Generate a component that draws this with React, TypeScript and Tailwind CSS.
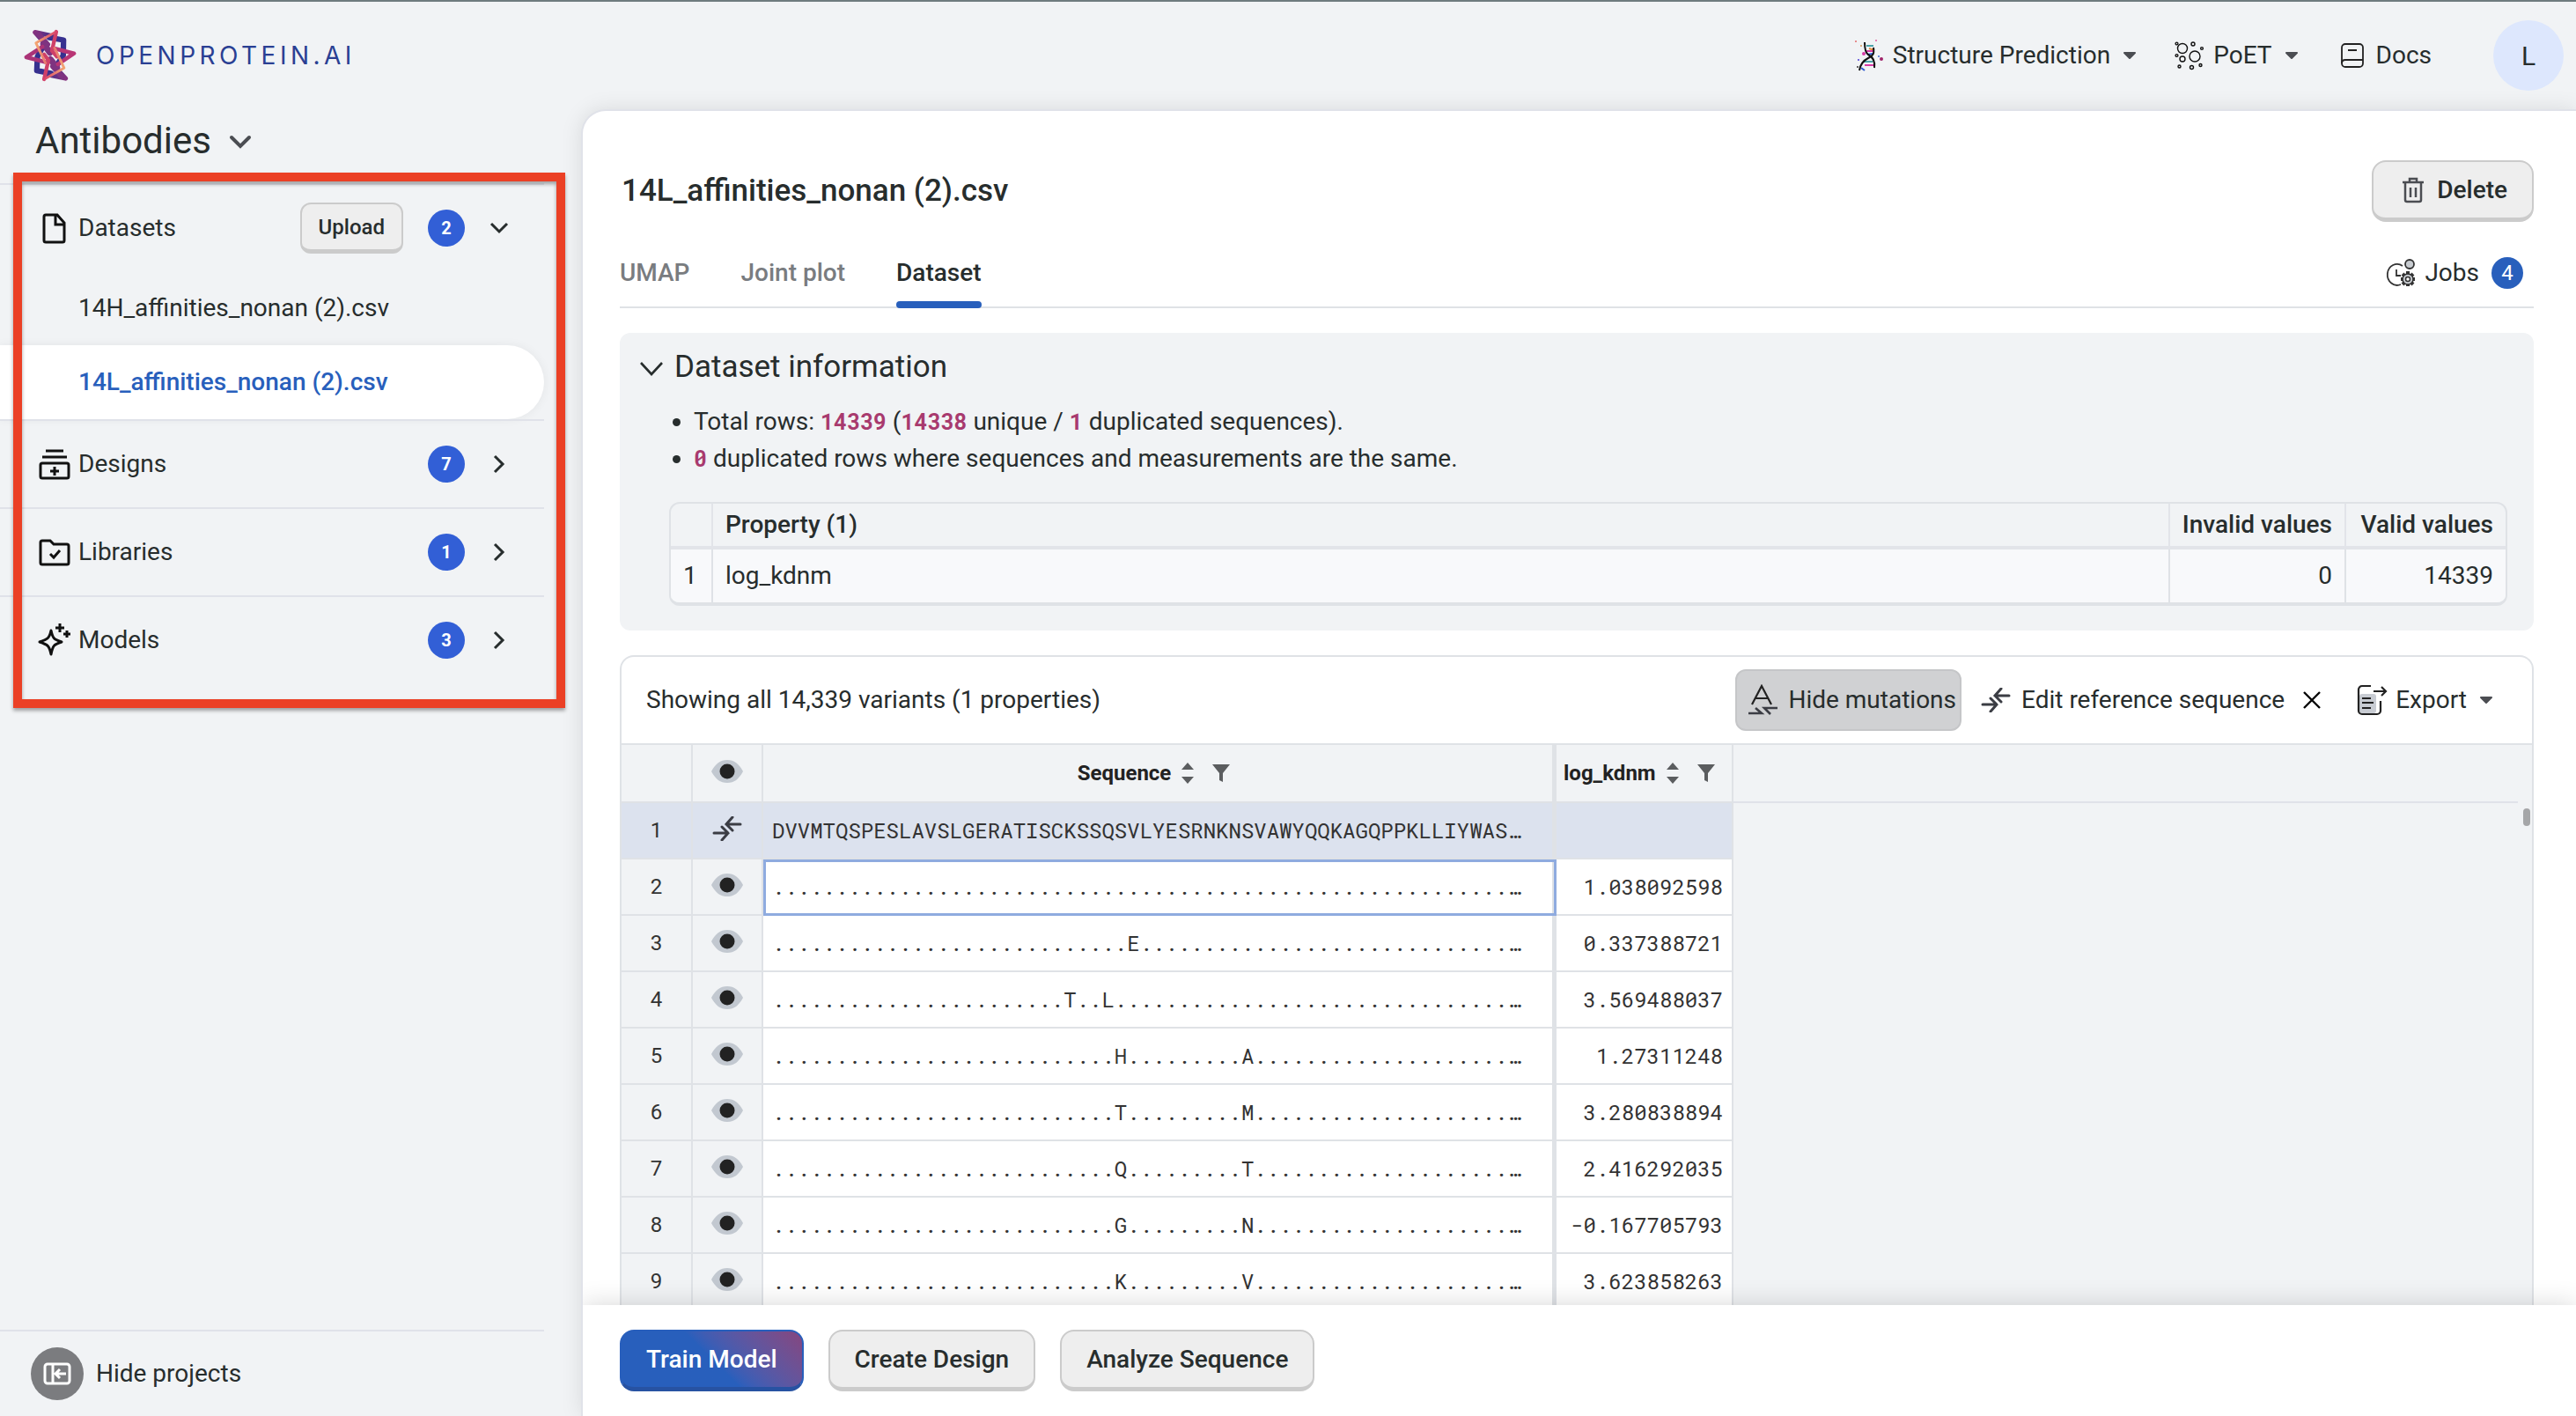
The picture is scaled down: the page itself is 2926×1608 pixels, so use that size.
import type { ReactNode } from "react";

type IconProps = { w: number; h: number; className?: string; children: ReactNode };

function Icon({ w, h, className = "", children }: IconProps) {
  return (
    <svg
      width={w}
      height={h}
      viewBox={`0 0 ${w} ${h}`}
      fill="none"
      stroke="currentColor"
      aria-hidden="true"
      className={`shrink-0 ${className}`}
    >
      {children}
    </svg>
  );
}

const Logo = () => (
  <svg width={60} height={60} viewBox="22 37 182 182" fill="none" strokeLinecap="round" strokeLinejoin="round" aria-hidden="true" className="shrink-0">
    <defs>
      <linearGradient id="lgOrange" x1="0" y1="0" x2="1" y2="0">
        <stop offset="0" stopColor="#f3a673" />
        <stop offset="1" stopColor="#d9456a" />
      </linearGradient>
      <linearGradient id="lgOrange2" x1="1" y1="0" x2="0" y2="0">
        <stop offset="0" stopColor="#f3a673" />
        <stop offset="1" stopColor="#d9456a" />
      </linearGradient>
      <linearGradient id="lgPurple" x1="0" y1="0" x2="1" y2="0.4">
        <stop offset="0" stopColor="#84327f" />
        <stop offset="1" stopColor="#3a2f8c" />
      </linearGradient>
      <linearGradient id="lgPurple2" x1="1" y1="1" x2="0" y2="0.5">
        <stop offset="0" stopColor="#84327f" />
        <stop offset="1" stopColor="#3a2f8c" />
      </linearGradient>
    </defs>
    <path d="M110 66 L159 75 L158 128 L138 158" stroke="#36308f" strokeWidth="19" />
    <path d="M116 190 L67 180 L69 132 L88 98" stroke="#36308f" strokeWidth="19" />
    <path d="M100 92 L61 48 L126 62" stroke="url(#lgPurple)" strokeWidth="16" />
    <path d="M126 164 L166 207 L100 193" stroke="url(#lgPurple2)" strokeWidth="16" />
    <path d="M74 56 L104 90 M152 199 L122 166" stroke="#7e3380" strokeWidth="18" />
    <path d="M90 88 L112 118" stroke="#7e3380" strokeWidth="22" />
    <path d="M136 170 L114 142" stroke="#7e3380" strokeWidth="22" />
    <path d="M86 98 L31 134 L104 152" stroke="#ab3377" strokeWidth="14" />
    <path d="M140 158 L195 121 L121 102" stroke="#b83575" strokeWidth="14" />
    <path d="M134 46 L119 112 L136 132" stroke="#cf4068" strokeWidth="13" />
    <path d="M92 210 L107 144 L92 124" stroke="#cf4068" strokeWidth="13" />
    <path d="M134 46 L64 85 L97 154" stroke="url(#lgOrange)" strokeWidth="9" />
    <path d="M92 210 L161 171 L128 102" stroke="url(#lgOrange2)" strokeWidth="9" />
  </svg>
);

const HelixIcon = () => (
  <Icon w={34} h={36}>
    <g strokeWidth="2">
      <path d="M14 7h8" stroke="#4aa3a8" />
      <path d="M17 10l6 2" stroke="#e8893a" />
      <path d="M13 13h9" stroke="#d63ba4" />
      <path d="M15 17l6-1" stroke="#2f5bd0" />
      <path d="M11 25h10" stroke="#4aa3a8" />
      <path d="M12 29h10" stroke="#d63ba4" />
      <path d="M8 32l4 3" stroke="#2f5bd0" />
    </g>
    <path d="M12 3c0 7 1 12 4 14 6 3 8 8 7 15M22 9c1 7 0 9-6 12-6 3-9 7-10 14" stroke="#111" strokeWidth="2" />
    <g stroke="none">
      <circle cx="2" cy="2" r="1" fill="#e06a6a" />
      <circle cx="25" cy="1" r="1" fill="#e05a9a" />
      <circle cx="8" cy="7" r="1" fill="#d69a5a" />
      <circle cx="11" cy="16" r="2" fill="#d63ba4" />
      <circle cx="5" cy="23" r="1" fill="#4a3bd6" />
      <circle cx="28" cy="19" r="1" fill="#3b6bd6" />
      <circle cx="31" cy="22" r="2" fill="#a0246a" />
      <circle cx="4" cy="31" r="1" fill="#333" />
    </g>
  </Icon>
);

const PoetIcon = () => (
  <Icon w={34} h={34} className="text-[#111]">
    <g strokeWidth="1.4">
      <circle cx="9" cy="9" r="5.5" />
      <circle cx="23" cy="18" r="6" />
      <circle cx="9" cy="21" r="3" />
      <circle cx="21" cy="4" r="2" />
      <circle cx="2.500" cy="3.500" r="1.400" />
      <circle cx="31" cy="9" r="1.400" />
      <circle cx="2.500" cy="17" r="1.400" />
      <circle cx="5.500" cy="29.500" r="1.500" />
      <circle cx="19.500" cy="30.500" r="2" />
      <circle cx="29.500" cy="28" r="1.500" />
    </g>
  </Icon>
);

const DocsIcon = () => (
  <Icon w={26} h={30} className="text-[#222]">
    <rect x="1" y="2" width="24" height="26" rx="4" strokeWidth="1.8" />
    <path d="M1 24c0-3 2-4 4-4h20M8 9h10" strokeWidth="1.8" />
  </Icon>
);

const Caret = () => (
  <Icon w={16} h={10} className="text-[#4b4d52]">
    <path d="M2 2h12L8 8z" fill="currentColor" strokeWidth="2" strokeLinejoin="round" />
  </Icon>
);

const ChevronDown = ({ className = "text-[#272d2d]" }: { className?: string }) => (
  <Icon w={22} h={14} className={className}>
    <path d="M2 2l9 9 9-9" strokeWidth="3" />
  </Icon>
);

const ChevronRight = () => (
  <span className="flex w-[22px] justify-center">
    <Icon w={14} h={22} className="text-[#272d2d]">
      <path d="M2 2l9 9-9 9" strokeWidth="3" />
    </Icon>
  </span>
);

const FileIcon = () => (
  <Icon w={36} h={36} className="text-[#111]">
    <path d="M6 5a2 2 0 0 1 2-2h13l8 9v20a2 2 0 0 1-2 2H8a2 2 0 0 1-2-2zM19 3v11h10" strokeWidth="3" />
  </Icon>
);

const DesignsIcon = () => (
  <Icon w={36} h={36} className="text-[#111]">
    <path d="M8 3h20M4 10h28M18 21v10M13 26h10" strokeWidth="3" />
    <rect x="2" y="17" width="32" height="17" rx="2" strokeWidth="3" />
  </Icon>
);

const LibrariesIcon = () => (
  <Icon w={36} h={36} className="text-[#111]">
    <path d="M2 7a2 2 0 0 1 2-2h9l4 4h15a2 2 0 0 1 2 2v19a2 2 0 0 1-2 2H4a2 2 0 0 1-2-2z" strokeWidth="3" />
    <path d="M13 20l4 4 7-8" strokeWidth="3" />
  </Icon>
);

const ModelsIcon = () => (
  <Icon w={38} h={40} className="text-[#111]">
    <path d="M15 9c2 9 3 10 12 13-9 3-10 4-12 14-2-10-4-11-13-14 9-3 11-4 13-13z" strokeWidth="3" strokeLinejoin="round" />
    <path d="M25 1v10M20 6h10M33 9v8M29 13h8" strokeWidth="3" />
  </Icon>
);

const TrashIcon = () => (
  <Icon w={26} h={30} className="text-[#4b4d52]">
    <path d="M1 6h24M9 5V2h8v3M4 7v19a2 2 0 0 0 2 2h14a2 2 0 0 0 2-2V7M10 12v11M16 12v11" strokeWidth="2.500" />
  </Icon>
);

const JobsIcon = () => (
  <Icon w={34} h={34} className="text-[#333]">
    <path d="M19 9A11 12 0 1 0 17 30" strokeWidth="1.800" />
    <path d="M12 13v7h5" strokeWidth="1.800" />
    <circle cx="27" cy="7" r="5" fill="#c8ccd1" strokeWidth="1.800" />
    <path d="M25 15v17M17 24h16M19 18l12 12M31 18L19 30" strokeWidth="4" />
    <circle cx="25" cy="24" r="6" fill="#c8ccd1" strokeWidth="1.500" />
    <circle cx="25" cy="24" r="2.500" fill="#fff" strokeWidth="1.500" />
  </Icon>
);

const MutationsIcon = () => (
  <Icon w={34} h={36} className="text-[#222]">
    <path d="M5 23L16 2l11 21M9 16h14" strokeWidth="2.200" />
    <path d="M1 33h15l-7-6M34 27H19l7 7" strokeWidth="2.600" stroke="#3b3d44" />
  </Icon>
);

const AlignIcon = () => (
  <Icon w={34} h={28} className="text-[#3b3d44]">
    <path d="M2 19h16M11 12l7 7-7 8M32 9H16M23 1l-7 8 7 7" strokeWidth="3" strokeLinecap="round" />
  </Icon>
);

const CloseIcon = () => (
  <Icon w={20} h={20} className="text-black">
    <path d="M1 1l18 18M19 1L1 19" strokeWidth="2.400" />
  </Icon>
);

const ExportIcon = () => (
  <Icon w={36} h={36} className="text-[#222]">
    <rect x="3" y="11" width="19" height="22" rx="3" fill="#c8ccd3" stroke="none" />
    <path d="M16 2H6a4 4 0 0 0-4 4v24a4 4 0 0 0 4 4h17a4 4 0 0 0 4-4V19" strokeWidth="2.200" />
    <path d="M19 8h14M28 3l5 5-5 5M6 16h10M6 21h13M6 27h10" strokeWidth="2.200" />
  </Icon>
);

const Eye = () => (
  <Icon w={36} h={28}>
    <path d="M0 14C5 5 10 1 18 1s13 4 18 13c-5 9-10 13-18 13S5 23 0 14z" fill="#c2c8d0" stroke="none" />
    <circle cx="18" cy="14" r="8.500" fill="#222" stroke="none" />
  </Icon>
);

const SortIcon = () => (
  <Icon w={14} h={26}>
    <path d="M7 1l7 8H0zM7 25l7-8H0z" fill="#5b5d5f" stroke="none" />
  </Icon>
);

const FilterIcon = () => (
  <Icon w={22} h={22}>
    <path d="M1 1h20l-8 10v10l-4-2v-8z" fill="#5b5d5f" stroke="none" />
  </Icon>
);

const PanelIcon = () => (
  <Icon w={32} h={26} className="text-white">
    <rect x="2" y="2" width="28" height="22" rx="3" strokeWidth="3" />
    <path d="M11 2v22M26 13H15M19 8l-5 5 5 5" strokeWidth="3" />
  </Icon>
);

const Count = ({ n }: { n: number }) => (
  <span className="flex size-[42px] items-center justify-center rounded-full bg-[#325fd6] text-[20px] font-bold text-white">{n}</span>
);

function Section({ icon, label, count, open, action }: { icon: ReactNode; label: string; count: number; open?: boolean; action?: ReactNode }) {
  return (
    <div className="flex h-[98px] items-center pr-10 pl-11">
      <span className="flex w-9 justify-center">{icon}</span>
      <span className="ml-[9px] flex-1">{label}</span>
      {action}
      <span className="ml-7 flex items-center gap-7">
        <Count n={count} />
        <button type="button" aria-label={`Toggle ${label}`}>
          {open ? <ChevronDown /> : <ChevronRight />}
        </button>
      </span>
    </div>
  );
}

const grayButton = "border-2 border-b-[5px] border-[#cbcbcb] bg-[#eeeeee] font-medium";

const Code = ({ children }: { children: ReactNode }) => (
  <code className="font-['Roboto_Mono','Liberation_Mono',monospace] text-[25px] font-bold text-[#a83a6e]">{children}</code>
);

const dots = (n: number) => ".".repeat(n);

function variant(mutations: [number, string][]) {
  const row = dots(58).split("");
  mutations.forEach(([at, residue]) => {
    row[at] = residue;
  });
  return row.join("") + "…";
}

const rows: { seq: string; value: string }[] = [
  { seq: "DVVMTQSPESLAVSLGERATISCKSSQSVLYESRNKNSVAWYQQKAGQPPKLLIYWAS…", value: "" },
  { seq: variant([]), value: "1.038092598" },
  { seq: variant([[28, "E"]]), value: "0.337388721" },
  { seq: variant([[23, "T"], [26, "L"]]), value: "3.569488037" },
  { seq: variant([[27, "H"], [37, "A"]]), value: "1.27311248" },
  { seq: variant([[27, "T"], [37, "M"]]), value: "3.280838894" },
  { seq: variant([[27, "Q"], [37, "T"]]), value: "2.416292035" },
  { seq: variant([[27, "G"], [37, "N"]]), value: "-0.167705793" },
  { seq: variant([[27, "K"], [37, "V"]]), value: "3.623858263" },
];

function Header() {
  return (
    <header className="flex h-[122px] shrink-0 items-center pr-[14px] pl-[27px]">
      <a href="#home" className="flex items-center gap-[22px]">
        <Logo />
        <span className="font-['Inter',sans-serif] text-[28px] tracking-[0.16em] text-[#2a3f93]">OPENPROTEIN.AI</span>
      </a>
      <nav className="ml-auto flex items-center">
        <button type="button" className="flex items-center">
          <HelixIcon />
          <span className="mr-3.5 ml-2.5">Structure Prediction</span>
          <Caret />
        </button>
        <button type="button" className="ml-[43px] flex items-center">
          <PoetIcon />
          <span className="mr-3.5 ml-2.5">PoET</span>
          <Caret />
        </button>
        <a href="#docs" className="ml-12 flex items-center gap-3.5">
          <DocsIcon />
          Docs
        </a>
      </nav>
      <button type="button" aria-label="Account" className="ml-[70px] size-20 rounded-full bg-[#dde7fd] text-[30px]">
        L
      </button>
    </header>
  );
}

function Sidebar() {
  return (
    <aside className="flex w-[660px] shrink-0 flex-col">
      <button type="button" className="mb-3.5 flex h-[70px] items-center gap-5 pl-10 text-[42px]">
        Antibodies
        <Icon w={26} h={16} className="mt-1 text-[#4b4d52]">
          <path d="M3 3l10 10L23 3" strokeWidth="4" strokeLinecap="round" />
        </Icon>
      </button>
      <nav aria-label="Project" className="relative">
        <ul className="mr-[42px]">
          <li className="border-t-2 border-[#e0e2e9]">
            <Section
              icon={<FileIcon />}
              label="Datasets"
              count={2}
              open
              action={
                <button type="button" className={`h-[58px] rounded-xl px-[19px] text-[24px] ${grayButton}`}>
                  Upload
                </button>
              }
            />
            <a href="#14h" className="flex h-[84px] items-center pl-[89px]">
              14H_affinities_nonan (2).csv
            </a>
            <a
              href="#14l"
              aria-current="page"
              className="flex h-[84px] items-center rounded-r-full bg-white pl-[89px] font-medium text-[#285fbc] shadow-[0_0_12px_rgba(0,0,0,0.06)]"
            >
              14L_affinities_nonan (2).csv
            </a>
          </li>
          <li className="border-t-2 border-[#e0e2e9]">
            <Section icon={<DesignsIcon />} label="Designs" count={7} />
          </li>
          <li className="border-t-2 border-[#e0e2e9]">
            <Section icon={<LibrariesIcon />} label="Libraries" count={1} />
          </li>
          <li className="border-t-2 border-[#e0e2e9]">
            <Section icon={<ModelsIcon />} label="Models" count={3} />
          </li>
        </ul>
        <div className="pointer-events-none absolute -top-3 right-[18px] -bottom-7 left-[15px] border-[10px] border-[#eb4025] shadow-[0_3px_4px_rgba(0,0,0,0.35),inset_0_3px_4px_rgba(0,0,0,0.35)]" />
      </nav>
      <button type="button" className="mt-auto mr-[42px] flex h-[98px] items-center gap-3.5 border-t-2 border-[#e0e2e9] pl-[35px]">
        <span className="flex size-[60px] items-center justify-center rounded-full bg-[#7b7c7f]">
          <PanelIcon />
        </span>
        Hide projects
      </button>
    </aside>
  );
}

function DatasetInfo() {
  return (
    <section className="mt-7 rounded-xl bg-[#f1f3f5] pt-3.5 pr-7 pb-7">
      <button type="button" className="flex h-[50px] items-center gap-3 pl-[22px] text-[35px]">
        <Icon w={28} h={18} className="mt-1">
          <path d="M2 2l12 13L26 2" strokeWidth="2.600" />
        </Icon>
        Dataset information
      </button>
      <ul className="mt-4 list-disc pl-[84px] leading-[42px]">
        <li>
          Total rows: <Code>14339</Code> (<Code>14338</Code> unique / <Code>1</Code> duplicated sequences).
        </li>
        <li>
          <Code>0</Code> duplicated rows where sequences and measurements are the same.
        </li>
      </ul>
      <div className="mt-7 mr-0.5 ml-14 overflow-hidden rounded-xl border-2 border-b-4 border-[#dfe2e6]">
        <table className="w-full border-separate border-spacing-0">
          <thead>
            <tr className="h-[52px] [&>th]:border-b-4 [&>th]:border-[#e2e4e9] [&>th]:px-3.5 [&>th]:font-medium [&>th:not(:last-child)]:border-r-2">
              <th className="w-[48px]" aria-label="Row" />
              <th className="text-left">Property (1)</th>
              <th className="w-[200px] text-right whitespace-nowrap">Invalid values</th>
              <th className="w-[181px] text-right whitespace-nowrap">Valid values</th>
            </tr>
          </thead>
          <tbody>
            <tr className="h-[60px] bg-[#f8f9fb] [&>td]:px-3.5 [&>td:not(:last-child)]:border-r-2 [&>td:not(:last-child)]:border-[#dfe2e6]">
              <td>1</td>
              <td>log_kdnm</td>
              <td className="text-right">0</td>
              <td className="text-right">14339</td>
            </tr>
          </tbody>
        </table>
      </div>
    </section>
  );
}

function VariantTable() {
  return (
    <table className="w-[1263px] table-fixed border-separate border-spacing-0 bg-white text-[24px] text-[#333]">
      <colgroup>
        <col className="w-[81px]" />
        <col className="w-[80px]" />
        <col className="w-[901px]" />
        <col className="w-[201px]" />
      </colgroup>
      <thead>
        <tr className="h-[66px] bg-[#f1f3f5] text-[#222] [&>th]:border-b-2 [&>th]:border-[#dfe2e6] [&>th]:font-bold">
          <th className="border-r-2" aria-label="Row" />
          <th className="border-r-2" aria-label="Visible">
            <span className="flex justify-center pb-1">
              <Eye />
            </span>
          </th>
          <th className="border-r-[5px]">
            <span className="flex items-center justify-center gap-3 pr-2">
              Sequence
              <SortIcon />
              <span className="ml-2">
                <FilterIcon />
              </span>
            </span>
          </th>
          <th className="border-r-2">
            <span className="flex items-center gap-3 pl-2">
              log_kdnm
              <SortIcon />
              <span className="ml-2">
                <FilterIcon />
              </span>
            </span>
          </th>
        </tr>
      </thead>
      <tbody>
        {rows.map((row, i) => {
          const reference = i === 0;
          const head = reference ? "bg-[#dce2ee]" : "bg-[#f1f3f5]";
          const cell = reference ? "bg-[#dce2ee]" : "bg-white";
          const border = i === 1 ? "border-b-2 border-[#dfe2e6] outline-[3px] -outline-offset-3 outline-[#8fabdf]" : "border-b-2 border-[#dfe2e6]";
          return (
            <tr key={i} className="h-16">
              <td className={`border-r-2 border-b-2 border-[#dfe2e6] text-center ${head}`}>{i + 1}</td>
              <td className={`border-r-2 border-b-2 border-[#dfe2e6] ${head}`}>
                <span className="flex justify-center pb-1">{reference ? <AlignIcon /> : <Eye />}</span>
              </td>
              <td className={`border-r-[5px] pl-[10px] font-['Roboto_Mono','Liberation_Mono',monospace] whitespace-nowrap ${border} ${cell}`}>{row.seq}</td>
              <td className={`border-r-2 border-b-2 border-[#dfe2e6] pr-[10px] text-right font-['Roboto_Mono','Liberation_Mono',monospace] ${cell}`}>{row.value}</td>
            </tr>
          );
        })}
      </tbody>
    </table>
  );
}

function Variants() {
  return (
    <section className="mt-7 rounded-t-2xl border-2 border-b-0 border-[#dfe2e6]">
      <div className="flex h-[100px] items-center border-b-2 border-[#dfe2e6] pr-11 pl-7">
        <p className="flex-1">Showing all 14,339 variants (1 properties)</p>
        <button type="button" aria-pressed="true" className="flex h-[70px] items-center gap-3 rounded-xl border-2 border-[#c5c6c8] bg-[#d0d1d3] pr-1 pl-3">
          <MutationsIcon />
          Hide mutations
        </button>
        <button type="button" className="ml-[22px] flex items-center gap-3">
          <AlignIcon />
          Edit reference sequence
        </button>
        <button type="button" aria-label="Clear reference sequence" className="ml-[21px]">
          <CloseIcon />
        </button>
        <button type="button" className="ml-[41px] flex items-center">
          <ExportIcon />
          <span className="mr-3.5 ml-2">Export</span>
          <Caret />
        </button>
      </div>
      <div className="flex bg-[#f1f3f5]">
        <VariantTable />
        <div className="mr-4 h-[66px] flex-1 border-b-2 border-[#e0e2e9]" />
        <div className="mt-[72px] mr-0.5 -ml-2.5 h-5 w-2 rounded-full bg-[#a5a6a8]" />
      </div>
    </section>
  );
}

export default function App() {
  return (
    <div className="flex h-screen flex-col overflow-hidden border-t-2 border-[#6f7b7e] bg-[#f1f3f5] font-['Roboto',sans-serif] text-[28px] text-[#272d2d]">
      <Header />
      <div className="flex min-h-0 flex-1">
        <Sidebar />
        <main className="flex min-w-0 flex-1 flex-col overflow-hidden rounded-tl-[28px] border-t-2 border-l-2 border-[#e0e2e9] bg-white shadow-[0_0_24px_rgba(0,0,0,0.1)]">
          <div className="min-h-0 flex-1 overflow-hidden pt-14 pr-12 pl-[42px]">
            <div className="flex h-[70px] items-center justify-between">
              <h1 className="pl-0.5 text-[35px] font-medium">14L_affinities_nonan (2).csv</h1>
              <button type="button" className={`flex h-[70px] items-center gap-3.5 rounded-2xl pr-7 pl-8 ${grayButton}`}>
                <TrashIcon />
                Delete
              </button>
            </div>
            <div className="mt-5 flex h-[78px] justify-between border-b-2 border-[#dfe2e6]">
              <div role="tablist" className="flex gap-[58px] font-medium text-[#797c80]">
                <button type="button" role="tab" aria-selected="false">
                  UMAP
                </button>
                <button type="button" role="tab" aria-selected="false">
                  Joint plot
                </button>
                <button type="button" role="tab" aria-selected="true" className="relative text-[#272d2d]">
                  Dataset
                  <span className="absolute inset-x-0 -bottom-0.5 h-2 rounded bg-[#285fbc]" />
                </button>
              </div>
              <button type="button" className="flex items-center pr-3">
                <JobsIcon />
                <span className="mr-3.5 ml-2.5">Jobs</span>
                <span className="flex size-9 items-center justify-center rounded-full bg-[#285fbc] text-[24px] text-white">4</span>
              </button>
            </div>
            <DatasetInfo />
            <Variants />
          </div>
          <footer className="relative flex h-[126px] shrink-0 items-start gap-7 bg-white pt-7 pl-[42px] shadow-[0_0_28px_rgba(0,0,0,0.16)]">
            <button
              type="button"
              className="h-[70px] rounded-2xl border-2 border-b-[5px] border-[#285fbc] border-b-[#2752a2] bg-linear-45 from-[#285fbc] from-50% to-[#85457f] px-7 font-medium text-white"
            >
              Train Model
            </button>
            <button type="button" className={`h-[70px] rounded-2xl px-7 ${grayButton}`}>
              Create Design
            </button>
            <button type="button" className={`h-[70px] rounded-2xl px-7 ${grayButton}`}>
              Analyze Sequence
            </button>
          </footer>
        </main>
      </div>
    </div>
  );
}
